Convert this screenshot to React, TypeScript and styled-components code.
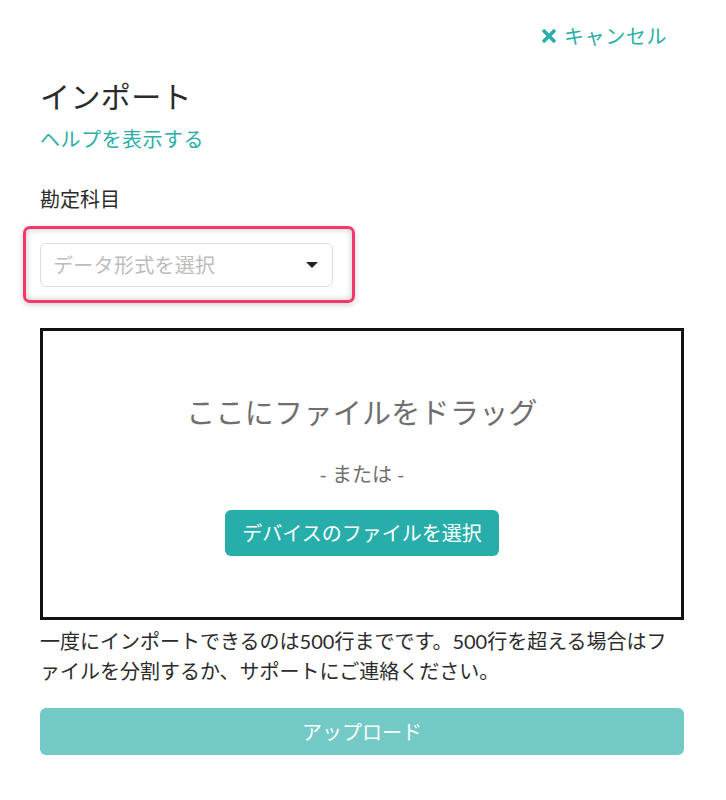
import React from "react";
import styled, { createGlobalStyle } from "styled-components";
import { FaTimes } from "react-icons/fa";

const GlobalStyle = createGlobalStyle`
  html, body {
    margin: 0;
    padding: 0;
    background: #ffffff;
  }
  body {
    font-family: Lato, "Noto Sans CJK JP", sans-serif;
    color: #333333;
    font-size: 20px;
  }
  * { box-sizing: border-box; }
`;

const Page = styled.div`
  width: 644px;
  margin-left: 40px;
  padding-top: 21px;
  padding-bottom: 40px;
  display: flex;
  flex-direction: column;
`;

const TopBar = styled.div`
  display: flex;
  justify-content: flex-end;
  padding-right: 17px;
`;

const CancelLink = styled.a`
  display: inline-flex;
  align-items: center;
  gap: 5px;
  color: #2aaea9;
  font-size: 20px;
  line-height: 30px;
  letter-spacing: 0.6px;
  cursor: pointer;
  text-decoration: none;
`;

const Title = styled.h1`
  margin: 25px 0 0;
  font-size: 30px;
  line-height: 40px;
  font-weight: 400;
  letter-spacing: 0.4px;
  color: #2b2b2b;
`;

const HelpLink = styled.a`
  margin-top: 8px;
  color: #2aaea9;
  font-size: 20px;
  line-height: 30px;
  letter-spacing: 0.5px;
  text-decoration: none;
  align-self: flex-start;
`;

const Label = styled.div`
  margin-top: 30px;
  font-size: 20px;
  line-height: 30px;
  color: #2b2b2b;
`;

const SelectWrap = styled.div`
  position: relative;
  margin-top: 29px;
  width: 293px;
`;

const Highlight = styled.span`
  position: absolute;
  top: -17px;
  left: -17px;
  right: -22px;
  bottom: -16px;
  border: 3px solid #f4376b;
  border-radius: 7px;
  box-shadow: inset 0 0 7px rgba(0, 0, 0, 0.22), 0 2px 6px rgba(0, 0, 0, 0.18);
  pointer-events: none;
`;

const SelectBox = styled.div`
  height: 44px;
  border: 1px solid #dcdcdc;
  border-radius: 6px;
  background: #fff;
  display: flex;
  align-items: center;
  justify-content: space-between;
  padding: 0 14px 0 12px;
`;

const Placeholder = styled.span`
  color: #bcbcbc;
  font-size: 20px;
  line-height: 30px;
  letter-spacing: 0.3px;
`;

const Caret = styled.span`
  width: 0;
  height: 0;
  border-left: 6px solid transparent;
  border-right: 6px solid transparent;
  border-top: 6px solid #222;
`;

const DropZone = styled.div`
  margin-top: 41px;
  border: 3px solid #111;
  display: flex;
  flex-direction: column;
  align-items: center;
  padding: 62px 0 61px;
`;

const DragText = styled.div`
  font-size: 29px;
  line-height: 40px;
  letter-spacing: 0.3px;
  color: #6f6f6f;
`;

const OrText = styled.div`
  margin-top: 26px;
  font-size: 20px;
  line-height: 30px;
  color: #6f6f6f;
`;

const Button = styled.button<{ $disabled?: boolean; $full?: boolean }>`
  font-family: Lato, "Noto Sans CJK JP", sans-serif;
  font-size: 20px;
  line-height: 30px;
  color: #ffffff;
  border: none;
  border-radius: 6px;
  background: ${(p) => (p.$disabled ? "#72c9c6" : "#27aeaa")};
  height: ${(p) => (p.$full ? "47px" : "46px")};
  width: ${(p) => (p.$full ? "100%" : "auto")};
  padding: 0 17px;
  cursor: ${(p) => (p.$disabled ? "default" : "pointer")};
`;

const PickButton = styled(Button)`
  margin-top: 21px;
`;

const Info = styled.p`
  margin: 6px 0 0;
  font-size: 20px;
  line-height: 30px;
  color: #2b2b2b;
`;

const UploadButton = styled(Button)`
  margin-top: 22px;
`;

export default function App() {
  return (
    <>
      <GlobalStyle />
      <Page>
        <TopBar>
          <CancelLink>
            <FaTimes size={20} />
            キャンセル
          </CancelLink>
        </TopBar>
        <Title>インポート</Title>
        <HelpLink>ヘルプを表示する</HelpLink>
        <Label>勘定科目</Label>
        <SelectWrap>
          <SelectBox>
            <Placeholder>データ形式を選択</Placeholder>
            <Caret />
          </SelectBox>
          <Highlight />
        </SelectWrap>
        <DropZone>
          <DragText>ここにファイルをドラッグ</DragText>
          <OrText>- または -</OrText>
          <PickButton>デバイスのファイルを選択</PickButton>
        </DropZone>
        <Info>
          一度にインポートできるのは500行までです。500行を超える場合はファイルを分割するか、サポートにご連絡ください。
        </Info>
        <UploadButton $disabled $full>
          アップロード
        </UploadButton>
      </Page>
    </>
  );
}
